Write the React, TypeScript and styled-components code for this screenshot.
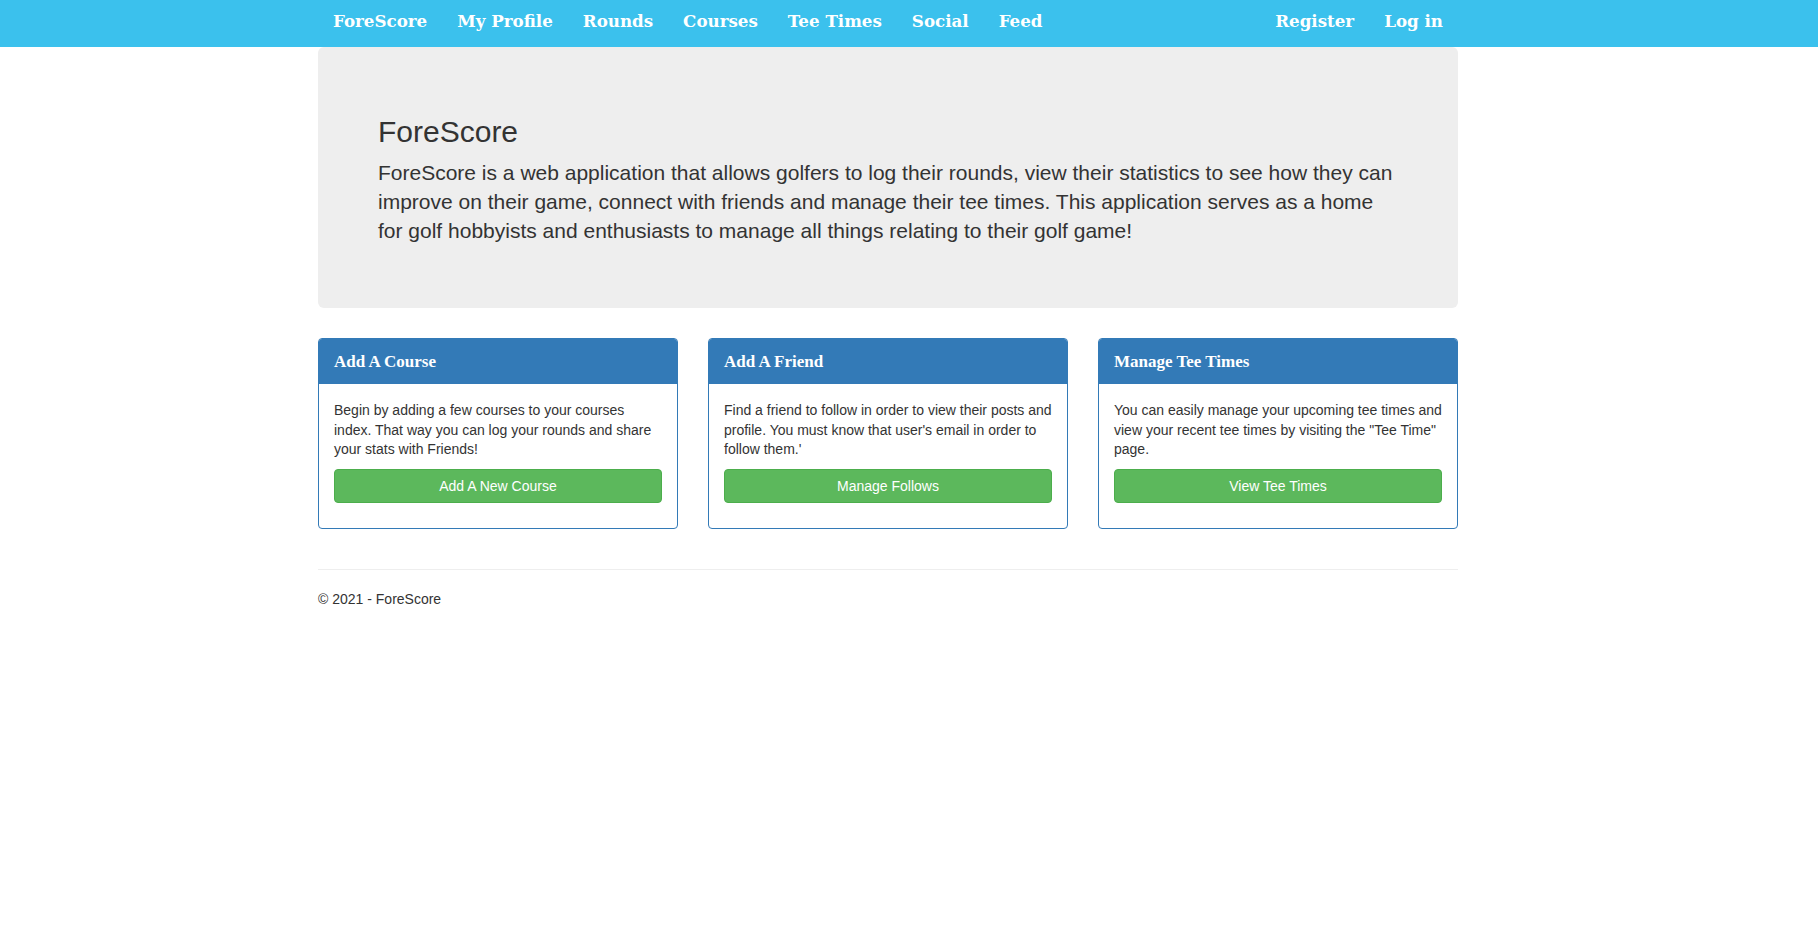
import React, { FC } from 'react';
import styled, { createGlobalStyle } from 'styled-components';

const GlobalStyle = createGlobalStyle`
  html, body {
    margin: 0;
    padding: 0;
    background: #fff;
  }
  body {
    font-family: 'Liberation Sans', Arial, Helvetica, sans-serif;
    font-size: 14px;
    line-height: 1.42857;
    color: #333;
  }
`;

const NavBar = styled.nav`
  background: #3bc1ed;
  height: 47px;
`;

const Container = styled.div`
  width: 1140px;
  margin-left: 318px;
`;

const NavInner = styled(Container)`
  display: flex;
  height: 47px;
`;

const NavGroup = styled.div<{ $right?: boolean }>`
  display: flex;
  margin-left: ${(p) => (p.$right ? 'auto' : '0')};
`;

const NavLink = styled.a`
  display: block;
  padding: 11px 15px 0;
  font-family: 'DejaVu Serif', Georgia, serif;
  font-weight: bold;
  font-size: 16.7px;
  line-height: 20px;
  color: #fff;
  text-decoration: none;
  cursor: pointer;
`;

const Jumbotron = styled.div`
  background: #eee;
  border-radius: 6px;
  padding: 48px 60px;
  margin-bottom: 30px;
`;

const Title = styled.h1`
  margin: 20px 0 10px;
  font-size: 30px;
  font-weight: normal;
  line-height: 33px;
`;

const Lead = styled.p`
  margin: 0 0 15px;
  font-size: 21px;
  line-height: 29px;
`;

const CardGrid = styled.div`
  display: grid;
  grid-template-columns: repeat(3, 1fr);
  column-gap: 30px;
`;

const Card = styled.div`
  border: 1px solid #337ab7;
  border-radius: 4px;
  margin-bottom: 20px;
  overflow: hidden;
`;

const CardHeader = styled.div`
  background: #337ab7;
  color: #fff;
  padding: 11px 15px 10px;
  font-family: 'Liberation Serif', 'Times New Roman', serif;
  font-weight: bold;
  font-size: 17px;
  line-height: 24px;
`;

const CardBody = styled.div`
  padding: 17px 15px 25px;
`;

const CardText = styled.p`
  margin: 0 0 9px;
  line-height: 19.5px;
`;

const Button = styled.a`
  display: block;
  box-sizing: border-box;
  height: 34px;
  padding: 6px 12px;
  text-align: center;
  font-size: 14px;
  line-height: 20px;
  color: #fff;
  background: #5cb85c;
  border: 1px solid #4cae4c;
  border-radius: 4px;
  text-decoration: none;
  cursor: pointer;
`;

const Rule = styled.hr`
  margin: 20px 0;
  border: 0;
  border-top: 1px solid #eee;
`;

const FooterText = styled.p`
  margin: 0 0 10px;
`;

interface CardData {
  title: string;
  text: string;
  action: string;
}

const cards: CardData[] = [
  {
    title: 'Add A Course',
    text: 'Begin by adding a few courses to your courses index. That way you can log your rounds and share your stats with Friends!',
    action: 'Add A New Course',
  },
  {
    title: 'Add A Friend',
    text: "Find a friend to follow in order to view their posts and profile. You must know that user's email in order to follow them.'",
    action: 'Manage Follows',
  },
  {
    title: 'Manage Tee Times',
    text: 'You can easily manage your upcoming tee times and view your recent tee times by visiting the "Tee Time" page.',
    action: 'View Tee Times',
  },
];

const leftLinks = ['ForeScore', 'My Profile', 'Rounds', 'Courses', 'Tee Times', 'Social', 'Feed'];
const rightLinks = ['Register', 'Log in'];

const App: FC = () => {
  return (
    <>
      <GlobalStyle />
      <NavBar>
        <NavInner>
          <NavGroup>
            {leftLinks.map((l) => (
              <NavLink key={l}>{l}</NavLink>
            ))}
          </NavGroup>
          <NavGroup $right>
            {rightLinks.map((l) => (
              <NavLink key={l}>{l}</NavLink>
            ))}
          </NavGroup>
        </NavInner>
      </NavBar>
      <Container>
        <Jumbotron>
          <Title>ForeScore</Title>
          <Lead>
            ForeScore is a web application that allows golfers to log their rounds, view their statistics
            to see how they can improve on their game, connect with friends and manage their tee times.
            This application serves as a home for golf hobbyists and enthusiasts to manage all things
            relating to their golf game!
          </Lead>
        </Jumbotron>
        <CardGrid>
          {cards.map((c) => (
            <Card key={c.title}>
              <CardHeader>{c.title}</CardHeader>
              <CardBody>
                <CardText>{c.text}</CardText>
                <Button>{c.action}</Button>
              </CardBody>
            </Card>
          ))}
        </CardGrid>
        <Rule />
        <footer>
          <FooterText>© 2021 - ForeScore</FooterText>
        </footer>
      </Container>
    </>
  );
};

export default App;
